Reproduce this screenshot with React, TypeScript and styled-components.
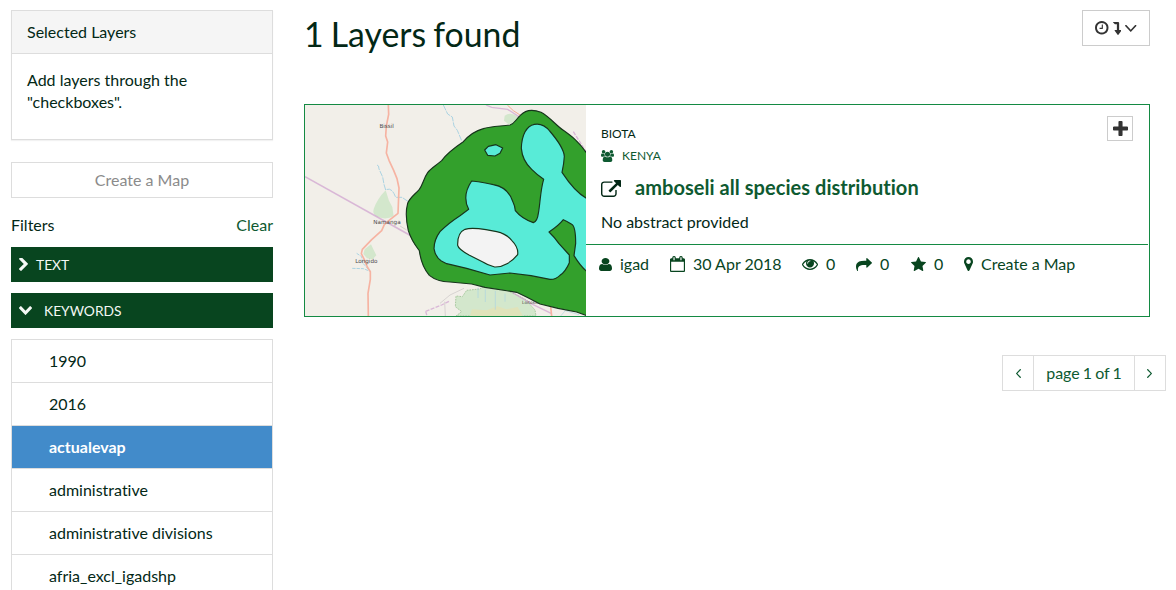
import React from 'react';
import styled, { createGlobalStyle, css } from 'styled-components';

const GlobalStyle = createGlobalStyle`
  *, *::before, *::after { box-sizing: border-box; }
  html, body { margin: 0; height: 590px; overflow: hidden; background: #fff; }
  body {
    font: 400 16px/22px Lato, "Liberation Sans", sans-serif;
    font-variant-ligatures: none;
    color: #032816;
  }
  button { font: inherit; color: inherit; margin: 0; cursor: pointer; }
  a { color: inherit; text-decoration: none; }
  svg { display: block; flex: none; }
`;

/* Each glyph: tight viewBox followed by its outline. */
const glyphs = {
  user: ['256 128 1280 1536', 'M1536 1399q0 109-62.5 187t-150.5 78h-854q-88 0-150.5-78t-62.5-187q0-85 8.5-160.5t31.5-152 58.5-131 94-89 134.5-34.5q131 128 313 128t313-128q76 0 134.5 34.5t94 89 58.5 131 31.5 152 8.5 160.5zm-256-887q0 159-112.5 271.5t-271.5 112.5-271.5-112.5-112.5-271.5 112.5-271.5 271.5-112.5 271.5 112.5 112.5 271.5z'],
  calendar: ['64 0 1664 1792', 'M192 1664h1408v-1024h-1408v1024zm384-1216v-288q0-14-9-23t-23-9h-64q-14 0-23 9t-9 23v288q0 14 9 23t23 9h64q14 0 23-9t9-23zm768 0v-288q0-14-9-23t-23-9h-64q-14 0-23 9t-9 23v288q0 14 9 23t23 9h64q14 0 23-9t9-23zm384-64v1280q0 52-38 90t-90 38h-1408q-52 0-90-38t-38-90v-1280q0-52 38-90t90-38h128v-96q0-66 47-113t113-47h64q66 0 113 47t47 113v96h384v-96q0-66 47-113t113-47h64q66 0 113 47t47 113v96h128q52 0 90 38t38 90z'],
  eye: ['0 384 1792 1152', 'M1664 960q-152-236-381-353 61 104 61 225 0 185-131.5 316.5t-316.5 131.5-316.5-131.5-131.5-316.5q0-121 61-225-229 117-381 353 133 205 333.5 326.5t434.5 121.5 434.5-121.5 333.5-326.5zm-720-384q0-20-14-34t-34-14q-125 0-214.5 89.5t-89.5 214.5q0 20 14 34t34 14 34-14 14-34q0-86 61-147t147-61q20 0 34-14t14-34zm848 384q0 34-20 69-140 230-376.5 368.5t-499.5 138.5-499.5-139-376.5-368q-20-35-20-69t20-69q140-229 376.5-368t499.5-139 499.5 139 376.5 368q20 35 20 69z'],
  share: ['0 64 1792 1536', 'M1792 640q0 26-19 45l-512 512q-19 19-45 19t-45-19-19-45v-256h-224q-98 0-175.5 6t-154 21.5-133 42.5-105.5 69.5-80 101-48.5 138.5-17.5 181q0 55 5 123 0 6 2.5 23.5t2.5 26.5q0 15-8.5 25t-23.5 10q-16 0-28-17-7-9-13-22t-13.5-30-10.5-24q-127-285-127-451 0-199 53-333 162-403 875-403h224v-256q0-26 19-45t45-19 45 19l512 512q19 19 19 45z'],
  star: ['64 32 1664 1587', 'M1728 647q0 22-26 48l-363 354 86 500q1 7 1 20 0 21-10.5 35.5t-30.5 14.5q-19 0-40-12l-449-236-449 236q-22 12-40 12-21 0-31.5-14.5t-10.5-35.5q0-6 2-20l86-500-364-354q-25-27-25-48 0-37 56-46l502-73 225-455q19-41 49-41t49 41l225 455 502 73q56 9 56 46z'],
  marker: ['384 128 1024 1536', 'M1152 640q0-106-75-181t-181-75-181 75-75 181 75 181 181 75 181-75 75-181zm256 0q0 109-33 179l-364 774q-16 33-47.5 52t-67.5 19-67.5-19-46.5-52l-365-774q-33-70-33-179 0-212 150-362t362-150 362 150 150 362z'],
  external: ['0 0 1792 1536', 'M1408 928v320q0 119-84.5 203.5t-203.5 84.5h-832q-119 0-203.5-84.5t-84.5-203.5v-832q0-119 84.5-203.5t203.5-84.5h704q14 0 23 9t9 23v64q0 14-9 23t-23 9h-704q-66 0-113 47t-47 113v832q0 66 47 113t113 47h832q66 0 113-47t47-113v-320q0-14 9-23t23-9h64q14 0 23 9t9 23zm384-864v512q0 26-19 45t-45 19-45-19l-176-176-652 652q-10 10-23 10t-23-10l-114-114q-10-10-10-23t10-23l652-652-176-176q-19-19-19-45t19-45 45-19h512q26 0 45 19t19 45z'],
  users: ['-64 0 1920 1792', 'M529 896q-162 5-265 128h-134q-82 0-138-40.5t-56-118.5q0-353 124-353 6 0 43.5 21t97.5 42.5 119 21.5q67 0 133-23-5 37-5 66 0 139 81 256zm1071 637q0 120-73 189.5t-194 69.5h-874q-121 0-194-69.5t-73-189.5q0-53 3.5-103.5t14-109 26.5-108.5 43-97.5 62-81 85.5-53.5 111.5-20q10 0 43 21.5t73 48 107 48 135 21.5 135-21.5 107-48 73-48 43-21.5q61 0 111.5 20t85.5 53.5 62 81 43 97.5 26.5 108.5 14 109 3.5 103.5zm-1024-1277q0 106-75 181t-181 75-181-75-75-181 75-181 181-75 181 75 75 181zm704 384q0 159-112.5 271.5t-271.5 112.5-271.5-112.5-112.5-271.5 112.5-271.5 271.5-112.5 271.5 112.5 112.5 271.5zm576 225q0 78-56 118.5t-138 40.5h-134q-103-123-265-128 81-117 81-256 0-29-5-66 66 23 133 23 59 0 119-21.5t97.5-42.5 43.5-21q124 0 124 353zm-128-609q0 106-75 181t-181 75-181-75-75-181 75-181 181-75 181 75 75 181z'],
  clock: ['128 128 1536 1536', 'M1024 544v448q0 14-9 23t-23 9h-320q-14 0-23-9t-9-23v-64q0-14 9-23t23-9h224v-352q0-14 9-23t23-9h64q14 0 23 9t9 23zm416 352q0-148-73-273t-198-198-273-73-273 73-198 198-73 273 73 273 198 198 273 73 273-73 198-198 73-273zm224 0q0 209-103 385.5t-279.5 279.5-385.5 103-385.5-103-279.5-279.5-103-385.5 103-385.5 279.5-279.5 385.5-103 385.5 103 279.5 279.5 103 385.5z'],
  levelDown: ['0 0 9 13', 'M.3 0H5.4Q6.5 0 6.5 1.1V8H8.5Q9.2 8.1 8.8 8.8L5.7 12.7Q5.3 13.1 4.9 12.7L1.8 8.8Q1.4 8.1 2.1 8H4.1V2.2H2.2Q2 2.2 1.8 2L.1.5Q-.1.1.3 0Z'],
  angleDown: ['397 676 998 559', 'M1395 736q0 13-10 23l-466 466q-10 10-23 10t-23-10l-466-466q-10-10-10-23t10-23l50-50q10-10 23-10t23 10l393 393 393-393q10-10 23-10t23 10l50 50q10 10 10 23z'],
  angleLeft: ['0 0 559 998', 'M559 83q0 13-10 23L156 499l393 393q10 10 10 23t-10 23l-50 50q-10 10-23 10t-23-10L10 522Q0 512 0 499t10-23L453 10q10-10 23-10t23 10l50 50q10 10 10 23z'],
  angleRight: ['0 0 559 998', 'M0 83q0 13 10 23l393 393L10 892q-10 10-10 23t10 23l50 50q10 10 23 10t23-10l443-466q10-10 10-23t-10-23L106 10Q96 0 83 0T60 10L10 60Q0 70 0 83z'],
  chevronRight: ['346 154 1036 1484', 'M1363 877l-742 742q-19 19-45 19t-45-19l-166-166q-19-19-19-45t19-45l531-531-531-531q-19-19-19-45t19-45l166-166q19-19 45-19t45 19l742 742q19 19 19 45t-19 45z'],
  chevronDown: ['90 533 1612 1035', 'M1683 808l-742 741q-19 19-45 19t-45-19l-742-741q-19-19-19-45.5t19-45.5l166-165q19-19 45-19t45 19l531 531 531-531q19-19 45-19t45 19l166 165q19 19 19 45.5t-19 45.5z'],
  plus: ['192 128 1408 1408', 'M1600 736v192q0 40-28 68t-68 28h-416v416q0 40-28 68t-68 28h-192q-40 0-68-28t-28-68v-416h-416q-40 0-68-28t-28-68v-192q0-40 28-68t68-28h416v-416q0-40 28-68t68-28h192q40 0 68 28t28 68v416h416q40 0 68 28t28 68z'],
} as const;

function Icon({ name, w, h }: { name: keyof typeof glyphs; w: number; h: number }) {
  return (
    <svg width={w} height={h} viewBox={glyphs[name][0]} preserveAspectRatio="none" fill="currentColor" aria-hidden="true">
      <path d={glyphs[name][1]} />
    </svg>
  );
}

const Page = styled.div`
  display: flex;
  width: 1176px;
  height: 590px;
  overflow: hidden;
  padding: 10px 10px 0 11px;
`;
const Sidebar = styled.aside`
  width: 262px;
  flex: none;
  margin-right: 31px;
`;
const Panel = styled.section`
  height: 130px;
  border: 1px solid #ddd;
  box-shadow: 0 1px 1px rgba(0, 0, 0, 0.05);
`;
const PanelHeading = styled.div`
  height: 43px;
  padding: 10px 15px 0;
  background: #f5f5f5;
  border-bottom: 1px solid #ddd;
`;
const PanelBody = styled.div`
  padding: 15px;
`;
const WideButton = styled.button`
  width: 100%;
  height: 36px;
  margin-top: 22px;
  padding: 0;
  background: #fff;
  border: 1px solid #ddd;
  && { color: #8b8b8b; }
`;
const FilterHead = styled.div`
  display: flex;
  justify-content: space-between;
  height: 49px;
  padding-top: 16px;
`;
const ClearLink = styled.a`
  && { color: #0e5a31; }
`;
const Bar = styled.a<{ $gap: number }>`
  && { color: #f4f8f5; }
  display: flex;
  align-items: center;
  gap: ${(p) => p.$gap}px;
  height: 35px;
  margin-bottom: 11px;
  padding-left: 8px;
  background: #08451f;
  font-size: 13.8px;
`;
const TagList = styled.ul`
  margin: 0;
  padding: 0;
  list-style: none;
  border: 1px solid #ddd;
`;
const Tag = styled.li<{ $active?: boolean }>`
  height: 43px;
  padding: 10px 0 0 37px;
  border-bottom: 1px solid #ddd;
  ${(p) => p.$active && css`
    background: #428bca;
    color: #fff;
    font-weight: 700;
  `}
`;

const Main = styled.main`
  flex: 1;
  min-width: 0;
`;
const TitleRow = styled.header`
  display: flex;
  justify-content: space-between;
  height: 94px;
  padding-right: 16px;
`;
const Title = styled.h1`
  margin: 4px 0 0;
  font-size: 33.8px;
  line-height: 40px;
  font-weight: 400;
  word-spacing: -1.5px;
`;
const SortButton = styled.button`
  display: flex;
  align-items: center;
  gap: 4px;
  width: 68px;
  height: 36px;
  padding: 0 0 0 12px;
  border: 1px solid #ccc;
  background: #fff;
  && { color: #333; }
`;
const Card = styled.article`
  display: flex;
  width: 846px;
  height: 213px;
  border: 1px solid #148a43;
`;
const CardBody = styled.div`
  flex: 1;
  min-width: 0;
  margin-right: 1px;
`;
const CardTop = styled.div`
  display: flex;
  justify-content: space-between;
  height: 140px;
  padding: 11px 15px 0;
  border-bottom: 1px solid #148a43;
`;
const Category = styled.div`
  margin-top: 8px;
  font-size: 12px;
  line-height: 20px;
`;
const Region = styled.div`
  display: flex;
  align-items: center;
  gap: 8px;
  margin-top: 2px;
  font-size: 12px;
  line-height: 20px;
  color: #0e5a31;
`;
const LayerTitle = styled.h4`
  display: flex;
  align-items: center;
  gap: 14px;
  margin: 7px 0 0;
  font-size: 20px;
  line-height: 28px;
  font-weight: 700;
  letter-spacing: 0.05px;
  svg { margin-top: 2px; }
  a { color: #0e5a31; }
`;
const Abstract = styled.p`
  margin: 10px 0 0;
`;
const AddButton = styled.button`
  display: grid;
  place-items: center;
  width: 26px;
  height: 25px;
  padding: 0;
  border: 1px solid #ccc;
  background: #fff;
  && { color: #333; }
`;
const Stats = styled.div`
  display: flex;
  padding: 8px 0 0 13px;
  color: #08451f;
`;
const Stat = styled.a<{ $w: number }>`
  display: flex;
  align-items: center;
  gap: 8px;
  width: ${(p) => p.$w}px;
  white-space: nowrap;
`;
const Pager = styled.nav`
  display: flex;
  justify-content: flex-end;
  margin-top: 38px;
`;
const PageCell = styled.a<{ $w: number }>`
  display: grid;
  place-items: center;
  width: ${(p) => p.$w}px;
  height: 36px;
  border: 1px solid #ddd;
  word-spacing: -1px;
  & + & { margin-left: -1px; }
  &:last-child { padding-right: 2px; }
  && { color: #0e5a31; }
`;

function MapThumb() {
  return (
    <svg width="281" height="211" viewBox="15 15 843 633" role="img" aria-label="Map preview">
      <rect x="15" y="15" width="843" height="633" fill="#f2efe9" />
      <g fill="#d3e7cc">
        <path d="M257 271Q232 296 221 327Q216 345 235 352Q260 360 281 349L277 321L267 302Z" />
        <path d="M194 448L213 433L220 448L229 466L218 478L201 475L190 462Z" />
        <path d="M614 47Q632 34 653 50L655 70L625 72L612 62Z" />
        <path d="M468 648L485 635L466 620L468 588L487 590L500 571L538 567L560 556L599 563L628 575L648 584L680 600L688 611L705 630L708 648Z" stroke="#a9c9a0" strokeWidth="3" strokeDasharray="5 3" />
      </g>
      <path d="M510 648L516 628L560 631L592 619L619 628L653 621L669 648Z" fill="#e0e3ba" />
      <g fill="none" stroke="#abd3e2" strokeWidth="3">
        <path d="M231 195Q237 195 237 207L248 231L252 253L257 270Q275 259 287 292L306 292L325 305M430 15L443 42L457 51L462 78L472 91L485 122" strokeDasharray="18 3" />
        <path d="M170 460L185 470L188 489L211 514L190 506L155 505" strokeDasharray="10 3" />
        <path d="M534 563V594M556 568V606M586 573V629M615 581V605M782 648L796 632L837 644" strokeWidth="2" />
      </g>
      <g fill="none" stroke="#ce9fce" strokeOpacity=".7">
        <path d="M15 230L338 410" strokeWidth="5" />
        <path d="M558 15L575 22L623 28L660 52M638 578L692 610L755 641" strokeWidth="4" />
        <path d="M377 634L425 615L449 603M377 634L381 648M820 95L858 155" strokeWidth="4" strokeDasharray="12 4" />
      </g>
      <path d="M420 610L450 585L492 565M436 648L434 605M300 378L320 390" fill="none" stroke="#c9c4c4" strokeWidth="2" />
      <path d="M622 15L640 32L665 48" fill="none" stroke="#f5a996" strokeWidth="3" />
      <path d="M265 15L266 43L259 78L257 108L263 126L259 159L267 181L281 211L291 236L297 264L294 340L270 359L253 374L245 392L215 419L187 448L184 461L193 479L202 501L211 515L211 538L204 580L205 648M752 620L755 648" fill="none" stroke="#f6b3a2" strokeWidth="5" strokeLinejoin="round" />
      <g fill="#4b4949" fontFamily='"DejaVu Sans"' fontSize="17" textAnchor="middle">
        <text x="260" y="84">Bissil</text>
        <text x="261" y="372">Namanga</text>
        <text x="199" y="490">Longido</text>
        <text x="698" y="613" fontSize="13">Loitokitok</text>
      </g>
      <g stroke="#17351c" strokeWidth="3.5" strokeLinejoin="round">
        <path fill="#33a02c" d="M864 166C840 127 814 108 790 91C769 77 748 50 723 37C698 27 677 29 661 46C645 61 645 70 630 75C600 79 573 78 550 86C520 94 505 108 490 125C463 143 440 160 425 182C405 199 392 205 383 218C371 235 368 255 358 268C345 283 330 292 323 310C316 335 320 370 325 392C335 423 345 435 358 452C362 483 370 505 388 526C405 540 425 545 450 546L515 552L555 562L650 577Q682 592 720 612L774 625L830 636L864 648Z" />
        <path fill="#58ebd7" d="M515 243Q557 248 580 254Q625 262 639 306Q645 318 646 332Q665 356 700 368Q712 364 715 340C720 317 721 269 731 238Q710 223 695 208Q667 182 664 145C665 105 680 77 703 73Q729 68 749 93Q791 142 793 169Q792 190 786 217Q828 281 866 298V519Q844 503 822 467L827 430Q827 379 815 373Q804 365 790 359Q776 377 747 396Q765 413 777 431L808 465V488Q797 514 780 526Q766 539 750 538L693 527L630 519L570 525L500 505L440 491L424 483Q406 471 402 446Q402 420 420 395Q443 371 480 347L506 328Q485 287 515 243Z" />
        <path fill="#f3f3f3" d="M495 388Q514 382 558 389L590 395Q618 401 635 421Q656 442 653 464C637 484 611 502 584 501Q563 496 550 487L507 465Q475 447 473 436Q472 398 495 388Z" />
        <path fill="#58ebd7" d="M554 150L565 139L588 134L608 144L600 160L585 168L563 166Z" />
      </g>
    </svg>
  );
}

const tags = ['1990', '2016', 'actualevap', 'administrative', 'administrative divisions', 'afria_excl_igadshp'];

export default function App() {
  return (
    <>
      <GlobalStyle />
      <Page>
        <Sidebar>
          <Panel>
            <PanelHeading>Selected Layers</PanelHeading>
            <PanelBody>Add layers through the "checkboxes".</PanelBody>
          </Panel>
          <WideButton>Create a Map</WideButton>
          <FilterHead>
            <span>Filters</span>
            <ClearLink href="#">Clear</ClearLink>
          </FilterHead>
          <Bar href="#" $gap={8}><Icon name="chevronRight" w={9} h={13} />TEXT</Bar>
          <Bar href="#" $gap={12}><Icon name="chevronDown" w={13} h={9} />KEYWORDS</Bar>
          <TagList>
            {tags.map((tag) => <Tag key={tag} $active={tag === 'actualevap'}>{tag}</Tag>)}
          </TagList>
        </Sidebar>
        <Main>
          <TitleRow>
            <Title>1 Layers found</Title>
            <SortButton aria-label="Sort">
              <Icon name="clock" w={13.5} h={13.5} />
              <Icon name="levelDown" w={8.5} h={13} />
              <Icon name="angleDown" w={11.5} h={7} />
            </SortButton>
          </TitleRow>
          <Card>
            <MapThumb />
            <CardBody>
              <CardTop>
                <div>
                  <Category>BIOTA</Category>
                  <Region><Icon name="users" w={13} h={12} />KENYA</Region>
                  <LayerTitle><Icon name="external" w={20} h={17} /><a href="#">amboseli all species distribution</a></LayerTitle>
                  <Abstract>No abstract provided</Abstract>
                </div>
                <AddButton aria-label="Add"><Icon name="plus" w={15} h={15} /></AddButton>
              </CardTop>
              <Stats>
                <Stat href="#" $w={71}><Icon name="user" w={13} h={13} />igad</Stat>
                <Stat href="#" $w={132}><Icon name="calendar" w={15} h={16} />30 Apr 2018</Stat>
                <Stat href="#" $w={54}><Icon name="eye" w={16} h={11} />0</Stat>
                <Stat href="#" $w={55}><Icon name="share" w={16} h={13} />0</Stat>
                <Stat href="#" $w={53}><Icon name="star" w={15} h={14} />0</Stat>
                <Stat href="#" $w={120}><Icon name="marker" w={9} h={14} />Create a Map</Stat>
              </Stats>
            </CardBody>
          </Card>
          <Pager>
            <PageCell href="#" $w={32}><Icon name="angleLeft" w={5} h={9} /></PageCell>
            <PageCell href="#" $w={102}>page 1 of 1</PageCell>
            <PageCell href="#" $w={32}><Icon name="angleRight" w={5} h={9} /></PageCell>
          </Pager>
        </Main>
      </Page>
    </>
  );
}
